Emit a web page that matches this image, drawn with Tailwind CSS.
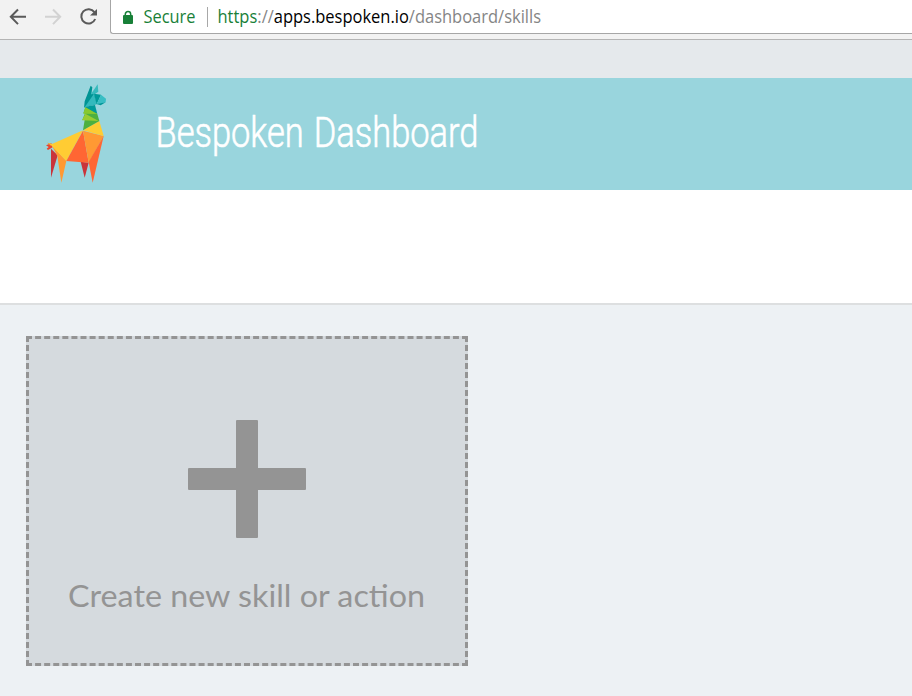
<!DOCTYPE html>
<html lang="en">
<head>
<meta charset="utf-8">
<title>Bespoken Dashboard</title>
<script src="https://cdn.jsdelivr.net/npm/@tailwindcss/browser@4"></script>
</head>
<body class="h-[696px] w-[912px] overflow-hidden bg-[#edf1f4] flex flex-col">
<!-- Browser toolbar -->
<div class="h-10 shrink-0 flex bg-[#f2f2f2] border-b border-[#b4b4b4]">
  <svg class="w-[110px] h-[34px] shrink-0" viewBox="0 0 110 34" fill="none" stroke-width="2">
    <path d="M26 16.8H11M18 9.5l-7.2 7.3 7.2 7.3" stroke="#5a5a5a"/>
    <path d="M45 16.800h15M53 9.500l7.200 7.300-7.200 7.300" stroke="#d2d2d2"/>
    <path d="M94.400 12.200A7.200 7.200 0 1 0 95.200 19" stroke="#5a5a5a" stroke-width="2"/>
    <path d="M97 9v6.500h-7z" fill="#5a5a5a"/>
  </svg>
  <div class="h-[34px] flex-1 bg-white border-l border-b border-[#a6a6a6] rounded-bl-[3px]">
    <svg class="w-[450px] h-[33px]" viewBox="111 0 450 33" font-family="'Open Sans','Noto Sans',sans-serif" font-size="17.3">
      <rect x="123" y="15" width="10" height="9" rx="1" fill="#188038"/>
      <path d="M125.3 15.500v-1.200a2.700 2.700 0 0 1 5.400 0v1.200" fill="none" stroke="#188038" stroke-width="1.500"/>
      <text x="143.500" y="23" fill="#188038" textLength="52" lengthAdjust="spacingAndGlyphs">Secure</text>
      <rect x="207" y="7" width="1" height="20" fill="#a8a8a8"/>
      <text x="217.500" y="23" textLength="323.500" lengthAdjust="spacingAndGlyphs"><tspan fill="#188038">https</tspan><tspan fill="#858585">://</tspan><tspan fill="#000">apps.bespoken.io</tspan><tspan fill="#858585">/dashboard/skills</tspan></text>
    </svg>
  </div>
</div>
<div class="h-[38px] shrink-0 bg-[#e5e9ec]"></div>
<!-- App header -->
<header class="h-28 shrink-0 flex items-center pl-9 bg-[#99d5dd]">
  <svg class="w-[84px] h-28" viewBox="0 6 252 336">
    <path d="M45 218L65 238 45 305z" fill="#c9343b"/>
    <path d="M30 208l16-6 4 12-14 8-4-4 6-5z" fill="#e8452f"/>
    <path d="M34 200l14 4-4 6z" fill="#e8863a"/>
    <path d="M46 206L91 255 76 320 64 240z" fill="#ff9933"/>
    <path d="M36 201L48 204 141 163 91 255 47 209z" fill="#ffcc33"/>
    <path d="M134 257L158 260 146 305z" fill="#c9343b"/>
    <path d="M141 164L158 260 91 255z" fill="#ff6633"/>
    <path d="M141 164L203 180 158 260z" fill="#ff9933"/>
    <path d="M203 180L170 320 158 258z" fill="#ff6633"/>
    <path d="M141 163L190 135 203 180z" fill="#ffcc33"/>
    <path d="M148 92L177 87 184 114 150 104z" fill="#009999"/>
    <path d="M148 94L184 114 190 135 141 163 146 132 139 132 147 112 142 112z" fill="#4db03f"/>
    <path d="M148 94L184 114 142 113z" fill="#88c92f"/>
    <path d="M138 133L148 113 188 135z" fill="#99cc33"/>
    <path d="M144 95L146 76 164 29 169 34 166 55 174 53 182 84 146 94z" fill="#009494"/>
    <path d="M165 54L185 25 187 47 176 55z" fill="#37babd"/>
    <path d="M174 53L182 84 146 94z" fill="#33b9bd"/>
    <path d="M174 53L195 56 182 85z" fill="#009999"/>
    <path d="M195 56L210 68 209 79 182 85z" fill="#38bec4"/>
    <path d="M209 79L194 88 181 84z" fill="#00979a"/>
  </svg>
  <svg class="ml-5 w-[350px] h-20" viewBox="140 94 350 80">
    <text x="155.500" y="147" fill="#fff" stroke="#fff" stroke-width=".6" font-family="Roboto,sans-serif" font-weight="300" font-size="43" word-spacing="2" textLength="323" lengthAdjust="spacingAndGlyphs">Bespoken Dashboard</text>
  </svg>
</header>
<div class="h-[115px] shrink-0 bg-white border-b-2 border-[#dddfe0]"></div>
<main class="flex-1 pt-[31px] pl-[26px]">
  <div class="w-[442px] h-[330px] bg-[#d5dade] border-[3px] border-dashed border-[#949494] flex flex-col items-center pt-[81px]">
    <svg class="w-[118px] h-[118px] shrink-0" viewBox="0 0 118 118" fill="#949494">
      <rect x="48" width="22" height="118" rx="1"/>
      <rect y="48" width="118" height="22" rx="1"/>
    </svg>
    <svg class="mt-[32px] w-[380px] h-[50px] shrink-0" viewBox="57 570 380 50" fill="#949494">
      <text x="68" y="607" font-family="Lato,sans-serif" font-size="30.500" textLength="357" lengthAdjust="spacingAndGlyphs">Create new skill or action</text>
    </svg>
  </div>
</main>
</body>
</html>
